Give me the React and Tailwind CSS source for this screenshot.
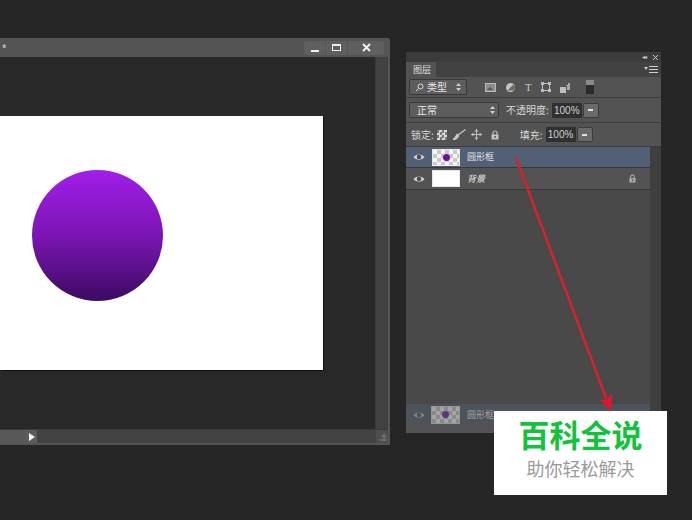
const cjk = { fontFamily: '"Noto Sans CJK SC", "Liberation Sans", sans-serif' };
const checker = "bg-[repeating-conic-gradient(#c9c9c9_0_25%,#f4f4f4_0_50%)] bg-[length:8px_8px]";

function Eye({ dim }) {
  return (
    <svg width="12" height="8" viewBox="0 0 12 8" className={dim ? "opacity-50" : ""}>
      <path d="M0.5 4 C3 0.5 9 0.5 11.5 4 C9 7.5 3 7.5 0.5 4Z" fill="#d0d0d0" />
      <circle cx="6" cy="4" r="2.2" fill="#4a4a4a" />
    </svg>
  );
}

function Lock({ size = 10, color = "#bdbdbd" }) {
  return (
    <svg width={size} height={size} viewBox="0 0 10 10">
      <path d="M3 5V3a2 2 0 0 1 4 0v2" fill="none" stroke={color} strokeWidth="1.2" />
      <rect x="1.5" y="4.5" width="7" height="5" fill={color} />
      <rect x="4.3" y="6" width="1.4" height="2" fill="#555" />
    </svg>
  );
}

function Updown() {
  return (
    <svg width="5" height="8" viewBox="0 0 5 8">
      <path d="M2.5 0L5 3H0Z M2.5 8L0 5H5Z" fill="#d0d0d0" />
    </svg>
  );
}

function Pct() {
  return (
    <div className="flex items-center">
      <div className="w-[30px] h-[15px] bg-[#303030] text-[10px] leading-[15px] text-[#d4d4d4] text-center" style={{ fontFamily: '"Liberation Sans", sans-serif' }}>100%</div>
      <div className="ml-[1px] w-[16px] h-[15px] rounded-[2px] bg-[#6a6a6a] border border-[#3c3c3c] flex items-center justify-center">
        <div className="w-[5px] h-[2px] bg-[#e0e0e0]" />
      </div>
    </div>
  );
}

function DocWindow() {
  return (
    <div className="absolute left-0 top-[38px] w-[390px] h-[407px] bg-[#474747] rounded-tr-[3px] border-r-2 border-b-2 border-[#555] flex flex-col">
      <div className="h-[19px] shrink-0 bg-[#545454] flex items-center justify-between">
        <span className="ml-[2px] text-[8px] leading-none text-[#ddd]">*</span>
        <div className="flex items-center h-[15px] mr-[4px] gap-[1px]">
          <div className="w-[21px] h-[14px] bg-[#5f5f5f] rounded-l-[3px] flex items-end justify-center pb-[3px]"><div className="w-[8px] h-[2px] bg-[#f0f0f0]" /></div>
          <div className="w-[21px] h-[14px] bg-[#5f5f5f] flex items-center justify-center"><div className="w-[9px] h-[7px] border-[1.5px] border-t-2 border-[#eee]" /></div>
          <div className="w-[36px] h-[14px] bg-[#5f5f5f] rounded-r-[3px] flex items-center justify-center">
            <svg width="9" height="9" viewBox="0 0 9 9"><path d="M1 1L8 8M8 1L1 8" stroke="#f0f0f0" strokeWidth="2" /></svg>
          </div>
        </div>
      </div>
      <div className="flex-1 flex min-h-0">
        <div className="flex-1 bg-[#282828] pt-[59px]">
          <div className="w-[323px] h-[254px] bg-white pt-[54px] pl-[32px] shadow-[1px_1px_0_#111]">
            <div className="w-[131px] h-[131px] rounded-full bg-gradient-to-b from-[#a11ee8] via-[#7c15b4] to-[#3d0a63]" />
          </div>
        </div>
        <div className="w-[13px] bg-[#424242] border-l border-[#3a3a3a]" />
      </div>
      <div className="h-[14px] shrink-0 flex bg-[#434343] border-t border-[#3a3a3a]">
        <div className="w-[26px] bg-[#585858]" />
        <div className="w-[11px] bg-[#5c5c5c] flex items-center justify-center">
          <svg width="6" height="8" viewBox="0 0 6 8"><path d="M0 0L6 4L0 8Z" fill="#f2f2f2" /></svg>
        </div>
        <div className="flex-1" />
        <div className="w-[12px] bg-[#4e4e4e] flex items-center justify-center">
          <svg width="9" height="8" viewBox="0 0 9 8"><path d="M6 0V8M3 3H9M1 7H9" stroke="#7a7a7a" strokeWidth="1" /></svg>
        </div>
      </div>
    </div>
  );
}

function LayerRow({ name, selected, italic, bg, lock, h = "h-[21px]" }) {
  return (
    <div className={`${h} flex items-center border-b border-[#3a3a3a] ${selected ? "bg-[#516075]" : "bg-[#535353]"}`}>
      <div className="w-[25px] flex justify-center shrink-0"><Eye /></div>
      <div className={`w-[28px] h-[17px] ml-[1px] border border-[#e8e8e8] shrink-0 flex items-center justify-center ${bg ? "bg-white" : checker}`}>
        {!bg && <div className="w-[7px] h-[7px] rounded-full bg-[#6a10a8]" />}
      </div>
      <span className={`ml-[7px] text-[9px] text-[#e4e4e4] ${italic ? "italic" : ""}`} style={cjk}>{name}</span>
      {lock && <div className="ml-auto mr-[13px]"><Lock size={9} color="#a8a8a8" /></div>}
    </div>
  );
}

function Panel() {
  return (
    <div className="absolute left-[406px] top-[52px] w-[255px] h-[381px] bg-[#494949] flex flex-col" style={cjk}>
      <div className="h-[10px] shrink-0 bg-[#3c3c3c] flex items-center justify-end gap-[7px] pr-[3px]">
        <span className="text-[6px] leading-none text-[#ccc] tracking-[-1px]">◂◂</span>
        <svg width="5" height="5" viewBox="0 0 5 5"><path d="M0 0L5 5M5 0L0 5" stroke="#ccc" strokeWidth="1" /></svg>
      </div>
      <div className="h-[15px] shrink-0 bg-[#424242] flex items-stretch justify-between">
        <div className="w-[30px] bg-[#535353] text-[9px] leading-[15px] text-[#e0e0e0] pl-[7px]">图层</div>
        <div className="flex items-center gap-[1px] pr-[3px]">
          <svg width="14" height="7" viewBox="0 0 14 7"><path d="M0 1L4 1L2 4Z" fill="#ccc" /><path d="M5 .5H14M5 3.5H14M5 6.5H14" stroke="#ccc" strokeWidth="1" /></svg>
        </div>
      </div>
      <div className="h-[21px] shrink-0 bg-[#535353] border-b border-[#3e3e3e] flex items-center pl-[3px]">
        <div className="w-[58px] h-[16px] rounded-[2px] bg-[#5d5d5d] border border-[#383838] flex items-center pl-[5px] pr-[5px]">
          <svg width="9" height="9" viewBox="0 0 9 9"><circle cx="5.5" cy="3.5" r="2.5" fill="none" stroke="#ddd" strokeWidth="1" /><path d="M3.5 5.5L1 8" stroke="#ddd" strokeWidth="1" /></svg>
          <span className="ml-[3px] text-[10px] leading-none text-[#e4e4e4]">类型</span>
          <div className="ml-auto flex"><Updown /></div>
        </div>
        <div className="ml-[18px] flex items-center gap-[9px]">
          <svg width="11" height="9" viewBox="0 0 11 9"><rect x=".5" y=".5" width="10" height="8" fill="#8c8c8c" stroke="#bbb" /><path d="M2 7L5 4L8 7Z" fill="#555" /></svg>
          <svg width="11" height="11" viewBox="0 0 11 11"><circle cx="5.5" cy="5.5" r="4.5" fill="#c4c4c4" /><path d="M2.5 8.5L8.5 2.5A4.5 4.5 0 0 1 8.5 8.5Z" fill="#666" /></svg>
          <span className="text-[11px] leading-none text-[#c8c8c8]" style={{ fontFamily: '"Liberation Serif", serif' }}>T</span>
          <svg width="10" height="10" viewBox="0 0 10 10"><rect x="1.5" y="1.5" width="7" height="7" fill="none" stroke="#bdbdbd" /><path d="M0 0H3V3H0ZM7 0H10V3H7ZM0 7H3V10H0ZM7 7H10V10H7Z" fill="#bdbdbd" /></svg>
          <svg width="11" height="11" viewBox="0 0 11 11"><path d="M0 5H6V11H0Z" fill="#bdbdbd" /><path d="M5 3H8V1H10V8H7V4" fill="#a8a8a8" /></svg>
        </div>
        <div className="ml-[15px] w-[8px] h-[14px] bg-[#2c2c2c] border-t-[5px] border-[#8a8a8a]" />
      </div>
      <div className="h-[25px] shrink-0 bg-[#535353] border-b border-[#3e3e3e] flex items-center pl-[3px]">
        <div className="w-[90px] h-[16px] rounded-[2px] bg-[#5d5d5d] border border-[#383838] flex items-center pl-[7px] pr-[3px]">
          <span className="text-[10px] leading-none text-[#e4e4e4]">正常</span>
          <div className="ml-auto flex"><Updown /></div>
        </div>
        <span className="ml-[7px] text-[10px] leading-none text-[#d8d8d8] whitespace-nowrap">不透明度:</span>
        <div className="ml-[3px]"><Pct /></div>
      </div>
      <div className="h-[24px] shrink-0 bg-[#535353] border-b border-[#3a3a3a] flex items-center pl-[5px]">
        <span className="text-[10px] leading-none text-[#d8d8d8] whitespace-nowrap">锁定:</span>
        <div className={`ml-[3px] w-[10px] h-[10px] bg-[repeating-conic-gradient(#d8d8d8_0_25%,#777_0_50%)] bg-[length:5px_5px]`} />
        <svg className="ml-[6px]" width="13" height="11" viewBox="0 0 13 11"><path d="M12.5 .5L5 6M0 10.5C3 10.5 5 9 5.5 6.5L4 5.5C3 7.5 2 9 0 10.5Z" stroke="#c8c8c8" strokeWidth="1.2" fill="#c8c8c8" /></svg>
        <svg className="ml-[5px]" width="11" height="11" viewBox="0 0 11 11"><path d="M5.5 0V11M0 5.5H11" stroke="#bdbdbd" strokeWidth="1" /><path d="M5.5 0L3.5 2.5H7.5ZM5.5 11L3.5 8.5H7.5ZM0 5.5L2.5 3.5V7.5ZM11 5.5L8.5 3.5V7.5Z" fill="#bdbdbd" /></svg>
        <div className="ml-[8px]"><Lock size={10} color="#c4c4c4" /></div>
        <span className="ml-[20px] text-[10px] leading-none text-[#d8d8d8] whitespace-nowrap">填充:</span>
        <div className="ml-[3px]"><Pct /></div>
      </div>
      <div className="flex-1 flex min-h-0">
        <div className="flex-1 flex flex-col min-w-0">
          <LayerRow name="圆形框" selected />
          <LayerRow name="背景" italic bg lock h="h-[22px]" />
          <div className="flex-1" />
          <div className="h-[21px] flex items-center bg-[#4f565f] opacity-80">
            <div className="w-[25px] flex justify-center shrink-0"><Eye dim /></div>
            <div className={`w-[29px] h-[18px] border border-[#aaa] flex items-center justify-center bg-[repeating-conic-gradient(#9a9a9a_0_25%,#bcbcbc_0_50%)] bg-[length:8px_8px]`}>
              <div className="w-[7px] h-[7px] rounded-full bg-[#5f2f8a]" />
            </div>
            <span className="ml-[7px] text-[9px] text-[#b8b8b8]">圆形框</span>
          </div>
          <div className="h-[8px] bg-[#535353]" />
        </div>
        <div className="w-[11px] bg-[#3f3f3f]" />
      </div>
    </div>
  );
}

function Watermark() {
  return (
    <div className="absolute left-[494px] top-[411px] w-[173px] h-[84px] bg-white flex flex-col items-center pt-[2px]" style={cjk}>
      <div className="text-[31px] leading-[42px] font-bold text-[#12c23c] whitespace-nowrap">百科全说</div>
      <div className="text-[18px] leading-[26px] text-[#9a9a9a] whitespace-nowrap">助你轻松解决</div>
    </div>
  );
}

export default function App() {
  return (
    <div className="relative w-[692px] h-[520px] overflow-hidden bg-[#262626]">
      <DocWindow />
      <Panel />
      <svg className="absolute left-0 top-0" width="692" height="520" viewBox="0 0 692 520">
        <path d="M516 158L606 398" stroke="#d9202e" strokeWidth="2.6" fill="none" />
        <path d="M611 411L600 400L607 399L612 393Z" fill="#e8132a" />
      </svg>
      <Watermark />
    </div>
  );
}
